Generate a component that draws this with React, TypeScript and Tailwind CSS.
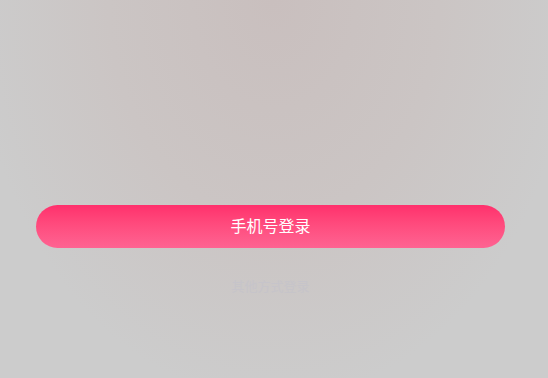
export default function App() {
	return (
		<div
			className="relative h-[378px] w-[548px] overflow-hidden bg-[#cccccc] bg-[radial-gradient(ellipse_300px_400px_at_274px_0px,#c9bfbe_0%,#cbc5c4_55%,#cccccc_100%)]"
			style={{ fontFamily: '"Noto Sans CJK SC", "Noto Sans", sans-serif' }}
		>
			<div className="pt-[205px]">
				<button className="ml-[36px] flex h-[43px] w-[469px] items-center justify-center rounded-full bg-gradient-to-b from-[#ff2f6c] to-[#fe6392] pb-[4px] text-[16px] text-white">
					手机号登录
				</button>
				<div className="mt-[28px] ml-[36px] w-[469px] text-center text-[13px] leading-[20px] text-[#c6c4ca]">
					其他方式登录
				</div>
			</div>
		</div>
	)
}
